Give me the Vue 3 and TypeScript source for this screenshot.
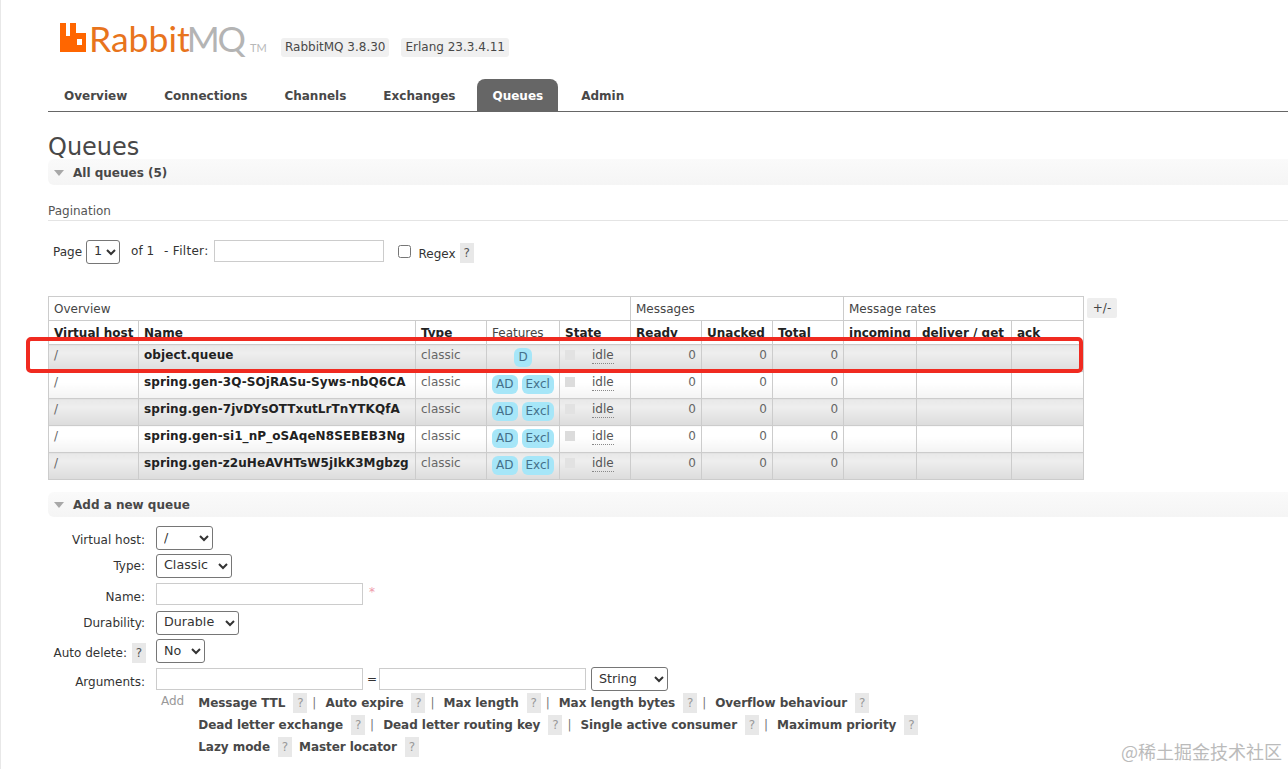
<script setup lang="ts">
interface Row { name: string; features: string[]; }
const rows: Row[] = [
  { name: 'object.queue', features: ['D'] },
  { name: 'spring.gen-3Q-SOjRASu-Syws-nbQ6CA', features: ['AD', 'Excl'] },
  { name: 'spring.gen-7jvDYsOTTxutLrTnYTKQfA', features: ['AD', 'Excl'] },
  { name: 'spring.gen-si1_nP_oSAqeN8SEBEB3Ng', features: ['AD', 'Excl'] },
  { name: 'spring.gen-z2uHeAVHTsW5jIkK3Mgbzg', features: ['AD', 'Excl'] },
];
const tabs = ['Overview', 'Connections', 'Channels', 'Exchanges', 'Queues', 'Admin'];
const argLines = [
  [['Message TTL', true], ['Auto expire', true], ['Max length', true], ['Max length bytes', true], ['Overflow behaviour', false]],
  [['Dead letter exchange', true], ['Dead letter routing key', true], ['Single active consumer', true], ['Maximum priority', false]],
  [['Lazy mode', false], ['Master locator', false]],
] as [string, boolean][][];
</script>

<template>
  <div class="page">
    <header class="head">
      <div class="logo">
        <svg class="mark" width="26" height="29" viewBox="0 0 26 29"><path fill="#f60" fill-rule="evenodd" d="M0 0h6v13h4V0h6v10h10v19H0zM17 16h5v6h-5z"/></svg>
        <span class="rabbit">Rabbit</span><span class="mq">MQ</span><span class="tm">TM</span>
      </div>
      <span class="ver first">RabbitMQ 3.8.30</span>
      <span class="ver">Erlang 23.3.4.11</span>
    </header>

    <nav class="tabs">
      <a v-for="t in tabs" :key="t" class="tab" :class="{ on: t === 'Queues' }">{{ t }}</a>
    </nav>

    <h1>Queues</h1>
    <div class="section-title first-sec"><i class="tri"></i>All queues (5)</div>

    <div class="pag-title">Pagination</div>
    <div class="pag">
      <span>Page</span>
      <select class="sel page-sel"><option>1</option></select>
      <span class="of">of 1</span>
      <span class="filter">- Filter:</span>
      <input class="inp filter-inp" />
      <input type="checkbox" class="chk" />
      <span class="regex">Regex</span>
      <span class="help regex-help">?</span>
    </div>

    <div class="table-wrap">
      <table>
        <colgroup>
          <col class="c90" /><col class="c277" /><col class="c71" /><col class="c73" /><col class="c71" />
          <col class="c71" /><col class="c71" /><col class="c71" />
          <col class="c73" /><col class="c95" /><col class="c72" />
        </colgroup>
        <thead>
          <tr class="h1"><th colspan="5">Overview</th><th colspan="3">Messages</th><th colspan="3">Message rates</th></tr>
          <tr class="h2">
            <th>Virtual host</th><th>Name</th><th>Type</th><th class="light">Features</th><th>State</th>
            <th>Ready</th><th>Unacked</th><th>Total</th><th>incoming</th><th>deliver / get</th><th>ack</th>
          </tr>
        </thead>
        <tbody>
          <tr v-for="(r, i) in rows" :key="r.name" :class="i % 2 === 0 ? 'alt1' : 'alt2'">
            <td class="muted">/</td>
            <td class="qname">{{ r.name }}</td>
            <td class="muted">classic</td>
            <td class="feat"><span v-for="f in r.features" :key="f" class="badge">{{ f }}</span></td>
            <td class="state"><i class="dot"></i><span class="idle">idle</span></td>
            <td class="num">0</td><td class="num">0</td><td class="num">0</td>
            <td></td><td></td><td></td>
          </tr>
        </tbody>
      </table>
      <span class="plus">+/-</span>
      <div class="highlight"></div>
    </div>

    <div class="section-title add"><i class="tri"></i>Add a new queue</div>

    <div class="form">
      <div class="frow r-vh"><label>Virtual host:</label><select class="sel w57"><option>/</option></select></div>
      <div class="frow r-type"><label>Type:</label><select class="sel w76"><option>Classic</option></select></div>
      <div class="frow r-name"><label>Name:</label><input class="inp w207" /><span class="star">*</span></div>
      <div class="frow r-dur"><label>Durability:</label><select class="sel w83"><option>Durable</option></select></div>
      <div class="frow r-auto"><label>Auto delete:<span class="help">?</span></label><select class="sel w49"><option>No</option></select></div>
      <div class="frow r-args"><label>Arguments:</label><input class="inp w207" /><span class="eq">=</span><input class="inp w207" /><select class="sel w77 str"><option>String</option></select></div>
      <div class="adds">
        <span class="add-link">Add</span>
        <div class="arglist">
          <div v-for="(line, li) in argLines" :key="li" class="argline">
            <template v-for="(a, ai) in line" :key="ai">
              <b>{{ a[0] }}</b><span class="help dim" :class="{ solo: !a[1] }">?</span><span v-if="a[1]" class="bar">|</span>
            </template>
          </div>
        </div>
      </div>
    </div>

    <div class="wm">@稀土掘金技术社区</div>
  </div>
</template>

<style>
html, body { margin: 0; background: #fff; }
</style>

<style scoped>
.page { position: relative; width: 1288px; height: 769px; overflow: hidden; box-sizing: border-box; padding: 0 0 0 48px; font: 12px "DejaVu Sans", Verdana, sans-serif; color: #484848; background: #fff; }
.page::before { content: ""; position: absolute; left: 0; top: 0; width: 1px; height: 769px; background: #e8e8e8; }
.head { display: flex; align-items: flex-start; height: 79px; }
.logo { display: flex; align-items: baseline; margin: 19px 0 0 12px; height: 40px; width: 221px; font-family: Lato, sans-serif; line-height: 40px; }
.mark { align-self: flex-start; margin: 4px 3px 0 0; flex: none; }
.rabbit { color: #e8741c; font-size: 35.5px; }
.mq { color: #b4b4b4; font-size: 35.5px; margin-left: -3px; letter-spacing: -2px; }
.tm { color: #b8b8b8; font-size: 11px; margin-left: 6px; }
.ver { margin-top: 38px; background: #f0f0f0; border-radius: 3px; padding: 2px 4px; line-height: 15px; font-size: 12px; color: #484848; }
.ver.first { margin-right: 12px; }
.tabs { display: flex; height: 32px; border-bottom: 1px solid #666; box-sizing: content-box; width: 1240px; }
.tab { display: block; height: 32px; line-height: 34px; font-weight: 700; font-size: 12px; color: #484848; }
.tab:nth-child(1) { margin: 0 37px 0 16px; }
.tab:nth-child(2) { margin-right: 37px; }
.tab:nth-child(3) { margin-right: 37px; }
.tab:nth-child(4) { margin-right: 22px; }
.tab.on { background: #666; color: #fff; border-radius: 8px 8px 0 0; padding: 0 15px; margin-right: 23px; }
h1 { margin: 0; padding-top: 22px; font-weight: 400; font-size: 24px; line-height: 27px; color: #484848; height: 27px; }
.section-title { display: flex; align-items: center; box-sizing: border-box; height: 26px; margin-top: -2px; background: linear-gradient(#fafafa, #f5f5f5); font-weight: 700; font-size: 12px; color: #484848; border-radius: 6px 0 0 6px; }
.first-sec { padding-top: 1px; }
.tri { width: 0; height: 0; border: 5.5px solid transparent; border-top: 6px solid #a8a8a8; border-bottom: 0; margin: 0 9px 0 6px; }
.pag-title { margin-top: 17px; padding-top: 1px; font-size: 12px; height: 17px; line-height: 17px; color: #555; border-bottom: 1px solid #e4e4e4; box-sizing: content-box; }
.pag { position: relative; display: flex; align-items: center; height: 29px; margin-top: 16px; padding-left: 5px; color: #333; }
.sel { height: 24px; box-sizing: border-box; border: 1px solid #767676; border-radius: 3px; background: #fff; font: 12.7px "DejaVu Sans", sans-serif; color: #333; padding: 0 0 2px 3px; margin: 0; }
.page-sel { width: 34px; margin-left: 4px; }
.of { margin-left: 11px; margin-top: -2px; }
.filter { margin-left: 10px; margin-top: -2px; letter-spacing: 0.3px; }
.inp { box-sizing: border-box; height: 22px; border: 1px solid #ccc; background: #fff; padding: 0; margin: 0; outline: 0; }
.filter-inp { width: 170px; margin-left: 6px; margin-top: -1px; }
.chk { width: 13px; height: 13px; margin: 0 0 0 14px; }
.regex { margin-left: 7px; margin-top: 5px; }
.help { display: inline-block; background: #e8e8e8; width: 14px; text-align: center; line-height: 20px; height: 20px; font-size: 12px; color: #555; }
.regex-help { margin-left: 4px; margin-top: 3px; }
.table-wrap { position: relative; margin-top: 30px; height: 184px; width: 1240px; }
table { border-collapse: collapse; table-layout: fixed; width: 1035px; font-size: 12px; }
.c90 { width: 90px; } .c277 { width: 277px; } .c71 { width: 71px; } .c73 { width: 73px; } .c95 { width: 95px; } .c72 { width: 72px; }
th, td { border: 1px solid #ccc; padding: 0 5px; text-align: left; white-space: nowrap; overflow: hidden; box-sizing: border-box; }
th { background: #fff; color: #222; }
.h1 th { height: 24px; font-weight: 400; color: #444; line-height: 22px; }
.h2 th { height: 24px; font-weight: 700; line-height: 22px; padding-top: 1px; }
.h2 th.light { font-weight: 400; color: #444; }
tbody tr { height: 27px; }
td { height: 27px; vertical-align: top; line-height: 20px; color: #555; }
.alt1 td { background: linear-gradient(#e8e8e8, #eeeeee 30%, #dcdcdc); }
.alt2 td { background: linear-gradient(#fff, #fff 40%, #f3f3f3); }
.qname { font-weight: 700; color: #222; letter-spacing: 0.09px; }
.muted { color: #666; }
.feat { text-align: center; padding: 3px 0 0; line-height: 18px; }
.badge { display: inline-block; background: #a6e6f8; color: #44708a; border-radius: 6px; padding: 0 4px; margin: 0 2px; line-height: 19px; height: 19px; font-size: 12px; }
.state { padding-left: 5px; }
.dot { display: inline-block; width: 10px; height: 10px; background: #dcdcdc; margin-right: 17px; vertical-align: -1px; }
.alt1 .dot { background: #e2e2e2; }
.idle { border-bottom: 1px dotted #888; color: #555; line-height: 15px; display: inline-block; }
.num { text-align: right; color: #666; }
.plus { position: absolute; left: 1039px; top: 2px; background: #eee; width: 30px; height: 20px; line-height: 20px; text-align: center; color: #444; border-radius: 2px; }
.highlight { position: absolute; left: -22px; top: 41px; width: 1049px; height: 28px; border: 4px solid #f02a20; border-radius: 5px; pointer-events: none; }
.section-title.add { margin-top: 12px; height: 25px; }
.form { margin-top: 9px; color: #333; position: relative; }
.frow { display: flex; align-items: center; }
.frow label { width: 97px; text-align: right; flex: none; margin-right: 11px; white-space: nowrap; font-size: 12px; }
.frow label .help { margin-left: 5px; margin-right: -1px; }
.r-vh label { margin-top: 4px; }
.r-name label { margin-top: 6px; }
.r-auto label { margin-top: 4px; }
.r-args label { margin-top: 5px; }
.w57 { width: 57px; } .w76 { width: 76px; } .w83 { width: 83px; } .w49 { width: 49px; } .w77 { width: 77px; }
.w207 { width: 207px; }
.r-vh { height: 24px; } .r-type { height: 23px; margin-top: 4px; } .r-name { height: 22px; margin-top: 6px; } .r-dur { height: 23px; margin-top: 6px; } .r-auto { height: 24px; margin-top: 5px; } .r-args { height: 22px; margin-top: 5px; }
.star { color: #e9a; margin: -5px 0 0 6px; }
.eq { margin: 0 2px 0 4px; }
.str { margin-left: 5px; }
.adds { display: flex; margin-top: 2px; margin-left: 113px; }
.add-link { color: #999; margin-right: 14px; line-height: 18px; }
.argline { height: 22px; line-height: 22px; white-space: nowrap; display: flex; align-items: center; font-size: 12px; }
.argline b { color: #484848; font-size: 12px; letter-spacing: -0.05px; }
.help.dim { color: #999; margin-left: 8px; margin-right: 5px; }
.help.dim.solo { margin-right: 7px; }
.bar { margin-right: 9px; color: #777; }
.wm { position: absolute; right: 6px; bottom: 5px; font: 18px "Noto Sans CJK SC", sans-serif; color: #bbb; }
</style>
